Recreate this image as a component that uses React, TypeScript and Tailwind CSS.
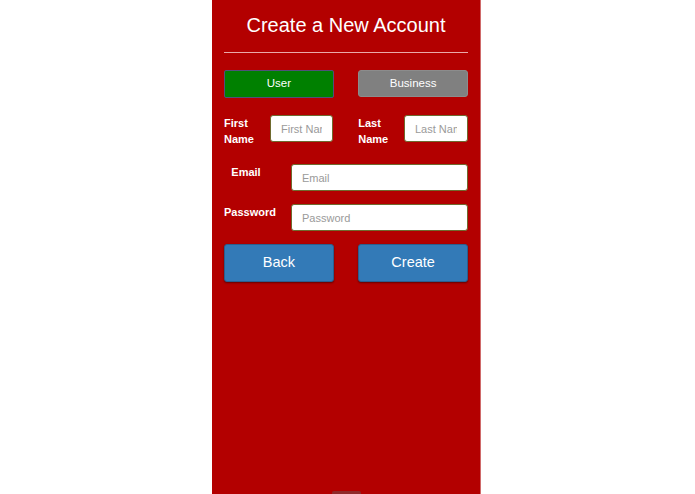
import React from "react";

const font = { fontFamily: '"Liberation Sans", Arial, Helvetica, sans-serif' };

function Field({ placeholder, className }: { placeholder: string; className: string }) {
  return (
    <input
      placeholder={placeholder}
      className={
        "h-[27px] rounded-[3px] border border-[#6f6a2e] bg-white px-[10px] text-[11px] text-gray-700 placeholder:text-[#9a9a9a] outline-none " +
        className
      }
    />
  );
}

export default function App() {
  return (
    <div className="min-h-screen w-full bg-white" style={font}>
      <div className="ml-[212px] flex h-[494px] w-[269px] flex-col border-r border-[#cf6a6a] bg-[#b30000] px-[12px] pt-[13px]">
        <h1 className="text-center text-[20px] font-normal leading-[24px] text-white">Create a New Account</h1>
        <div className="mt-[15px] h-px w-full bg-[#eaa9a9]" />

        <div className="mt-[17px] flex justify-between">
          <button className="h-[28px] w-[45%] rounded-[2px] border border-[#50507a] bg-[#008000] text-[11.5px] text-white">
            User
          </button>
          <button className="h-[27px] w-[45%] rounded-[3px] border border-[#8c8c8c] bg-[#808080] text-[11.5px] text-white">
            Business
          </button>
        </div>

        <div className="mt-[17px] flex justify-between">
          <div className="flex w-[45%] items-start">
            <label className="w-[46px] text-[11px] font-bold leading-[16px] text-white">
              First
              <br />
              Name
            </label>
            <Field placeholder="First Name" className="w-[63px]" />
          </div>
          <div className="flex w-[45%] items-start">
            <label className="w-[46px] text-[11px] font-bold leading-[16px] text-white">
              Last
              <br />
              Name
            </label>
            <Field placeholder="Last Name" className="w-[64px]" />
          </div>
        </div>

        <div className="mt-[17px] flex items-start">
          <label className="w-[44px] text-center text-[11px] font-bold leading-[16px] text-white">Email</label>
          <Field placeholder="Email" className="ml-auto w-[177px]" />
        </div>

        <div className="mt-[13px] flex items-start">
          <label className="w-[44px] whitespace-nowrap text-left text-[11px] font-bold leading-[16px] text-white">
            Password
          </label>
          <Field placeholder="Password" className="ml-auto w-[177px]" />
        </div>

        <div className="mt-[13px] flex justify-between">
          <button className="h-[38px] w-[45%] rounded-[3px] border border-[#2a5f8f] bg-[#337ab7] text-[14.5px] text-white shadow-[0_1px_2px_rgba(0,0,0,0.45)]">
            Back
          </button>
          <button className="h-[38px] w-[45%] rounded-[3px] border border-[#2a5f8f] bg-[#337ab7] text-[14.5px] text-white shadow-[0_1px_2px_rgba(0,0,0,0.45)]">
            Create
          </button>
        </div>

        <div className="mx-auto mt-auto h-[3px] w-[29px] rounded-t-[2px] bg-[#8e2a2a]" />
      </div>
    </div>
  );
}
